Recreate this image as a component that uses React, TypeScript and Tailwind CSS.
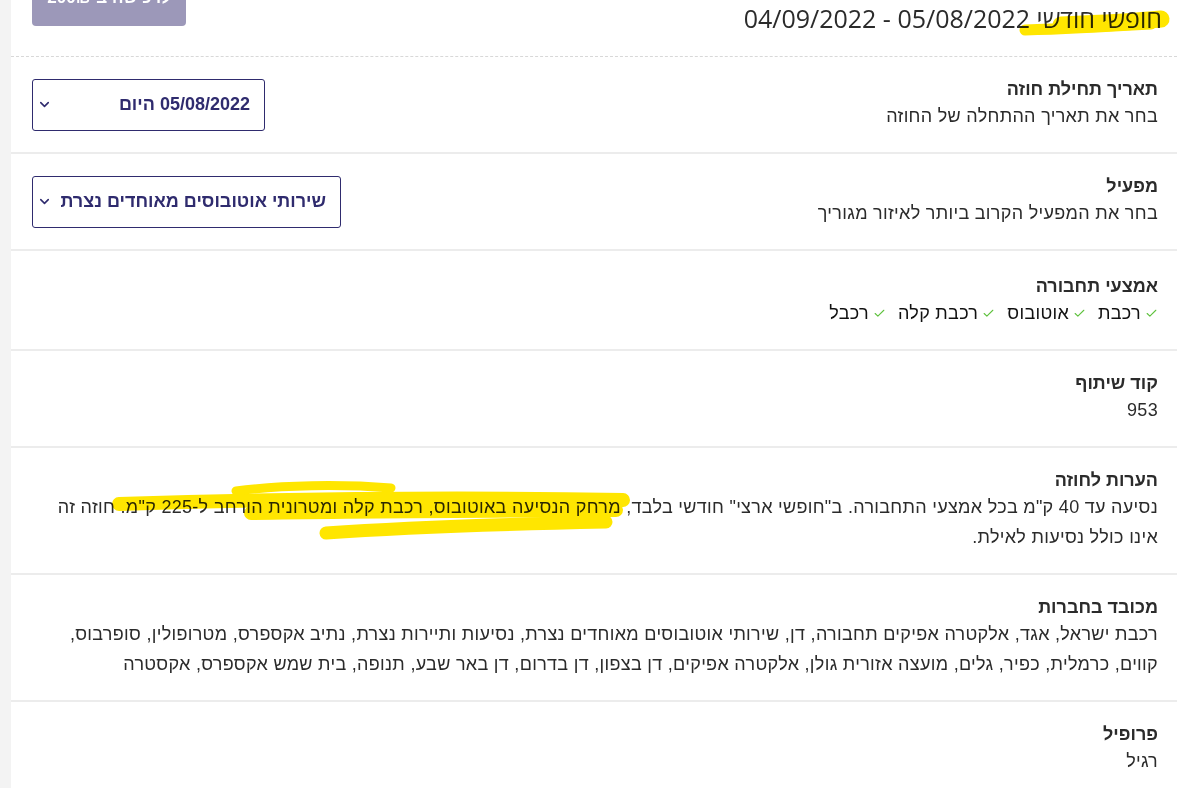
import { Check, ChevronDown } from "lucide-react";

type Row = { title: string; lines?: string[]; wrap?: string };

const rows: Row[] = [
    { title: "קוד שיתוף", lines: ["953"] },
    {
        title: "הערות לחוזה",
        wrap: "נסיעה עד 40 ק\"מ בכל אמצעי התחבורה. ב\"חופשי ארצי\" חודשי בלבד, מרחק הנסיעה באוטובוס, רכבת קלה ומטרונית הורחב ל-225 ק\"מ. חוזה זה אינו כולל נסיעות לאילת.",
    },
    {
        title: "מכובד בחברות",
        wrap: "רכבת ישראל, אגד, אלקטרה אפיקים תחבורה, דן, שירותי אוטובוסים מאוחדים נצרת, נסיעות ותיירות נצרת, נתיב אקספרס, מטרופולין, סופרבוס, קווים, כרמלית, כפיר, גלים, מועצה אזורית גולן, אלקטרה אפיקים, דן בצפון, דן בדרום, דן באר שבע, תנופה, בית שמש אקספרס, אקסטרה",
    },
    { title: "פרופיל", lines: ["רגיל"] },
];

const transport = ["רכבת", "אוטובוס", "רכבת קלה", "רכבל"];

// Section title + description block
function Info({ title, children }: { title: string; children: React.ReactNode }) {
    return (
        <div className="pt-[20px] pb-[21px]">
            <div className="text-[18px] leading-[24px] font-bold text-[#2b2b2b]">{title}</div>
            <div className="text-[18px] leading-[30px] tracking-[0.3px] text-[#2b2b2b]">{children}</div>
        </div>
    );
}

// Dropdown-looking box on the left
function SelectBox({ label, width }: { label: string; width: string }) {
    return (
        <div className={`flex items-center justify-between h-[52px] border border-[#2f2b6e] rounded-[3px] pr-[14px] pl-[4px] ${width}`}>
            <span className="text-[18px] font-bold text-[#2f2b6e]">{label}</span>
            <ChevronDown size={15} strokeWidth={2.5} className="text-[#2f2b6e]" />
        </div>
    );
}

export default function App() {
    return (
        <div className="flex w-[1177px] h-[788px] overflow-hidden bg-white" style={{ fontFamily: '"Liberation Sans", Arial, sans-serif' }}>
            <div className="w-[11px] shrink-0 bg-[#f3f3f3]" />
            <div dir="rtl" className="relative flex-1 bg-white">
                {/* Header */}
                <div className="flex items-start justify-between h-[57px] pr-[15px] pl-[21px] border-b border-dashed border-[#d8d8d8]">
                    <div className="text-[25px] leading-[36px] text-[#2b2b2b]" style={{ fontFamily: '"Open Sans", "Liberation Sans", sans-serif' }}>
                        חופשי חודשי 05/08/2022 - 04/09/2022
                    </div>
                    <button className="mt-[-30px] h-[56px] w-[154px] rounded-[4px] bg-[#9c98b9] text-white font-bold text-[17px]">
                        לרכישה ב-200₪
                    </button>
                </div>

                {/* Start date */}
                <div className="flex items-center justify-between pr-[19px] pl-[21px] border-b-2 border-[#ececec]">
                    <Info title="תאריך תחילת חוזה">בחר את תאריך ההתחלה של החוזה</Info>
                    <SelectBox label="05/08/2022 היום" width="w-[233px]" />
                </div>

                {/* Operator */}
                <div className="flex items-center justify-between pr-[19px] pl-[21px] border-b-2 border-[#ececec]">
                    <Info title="מפעיל">בחר את המפעיל הקרוב ביותר לאיזור מגוריך</Info>
                    <SelectBox label="שירותי אוטובוסים מאוחדים נצרת" width="w-[309px]" />
                </div>

                {/* Transport means */}
                <div className="pr-[19px] pl-[21px] pt-[3px] border-b-2 border-[#ececec]">
                    <Info title="אמצעי תחבורה">
                        <div className="flex items-center gap-x-[12px] text-[#111]">
                            {transport.map((t) => (
                                <span key={t} className="flex items-center gap-x-[4px]">
                                    <Check size={13} strokeWidth={2} className="text-[#5fc23e]" />
                                    {t}
                                </span>
                            ))}
                        </div>
                    </Info>
                </div>

                {rows.map((r) => (
                    <div key={r.title} className="pr-[19px] pl-[21px] border-b-2 border-[#ececec] last:border-b-0">
                        <Info title={r.title}>{r.wrap ?? r.lines?.join(" ")}</Info>
                    </div>
                ))}

                {/* Highlighter marks drawn over the screenshot */}
                <svg className="pointer-events-none absolute left-0 top-0 mix-blend-multiply" width="1166" height="788">
                    <path d="M1014,30 C1050,29 1090,27 1140,24" stroke="#ffe600" strokeWidth="11" fill="none" strokeLinecap="round" />
                    <path d="M1050,25 C1100,23 1130,21 1150,19" stroke="#ffe600" strokeWidth="17" fill="none" strokeLinecap="round" />
                    <path d="M612,500 C450,497 300,498 108,504" stroke="#ffe600" strokeWidth="14" fill="none" strokeLinecap="round" />
                    <path d="M380,488 C330,484 270,485 225,491" stroke="#ffe600" strokeWidth="9" fill="none" strokeLinecap="round" />
                    <path d="M605,510 C450,511 330,511 240,513" stroke="#ffe600" strokeWidth="14" fill="none" strokeLinecap="round" />
                    <path d="M595,522 C500,524 400,527 315,533" stroke="#ffe600" strokeWidth="13" fill="none" strokeLinecap="round" />
                </svg>
            </div>
        </div>
    );
}
